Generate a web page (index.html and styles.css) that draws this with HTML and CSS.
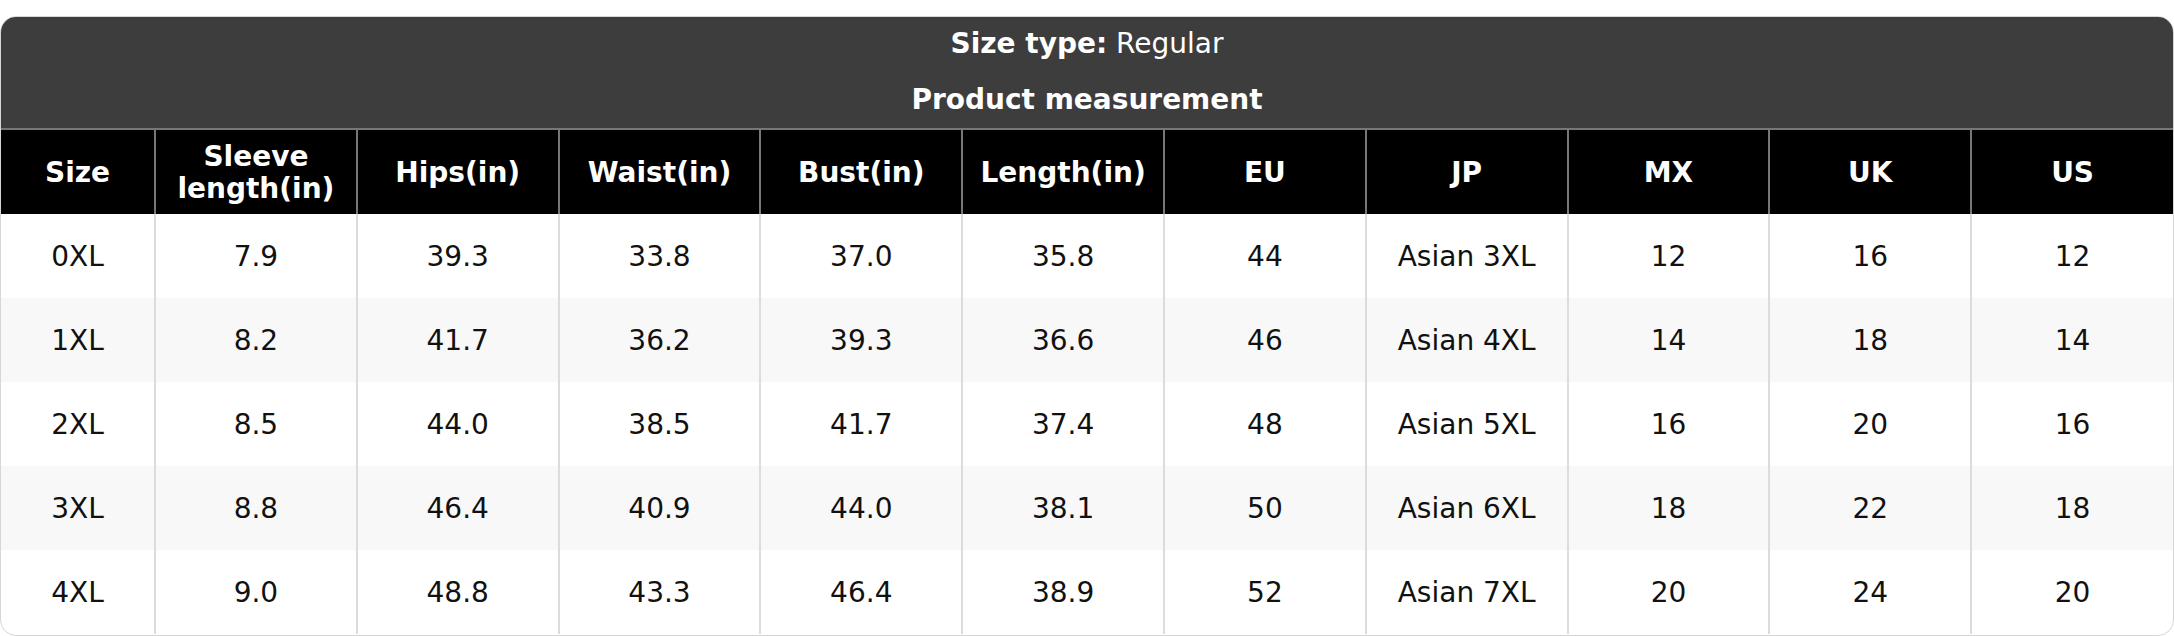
FILE: index.html
```html
<!DOCTYPE html>
<html>
<head>
<meta charset="utf-8">
<link rel="stylesheet" href="styles.css">
</head>
<body>
<div class="card">
  <div class="band">
    <div class="line"><b>Size type:</b> Regular</div>
    <div class="line"><b>Product measurement</b></div>
  </div>
  <table class="sizes">
    <colgroup>
      <col class="c-size">
      <col span="10">
    </colgroup>
    <thead>
      <tr>
        <th>Size</th><th>Sleeve<br>length(in)</th><th>Hips(in)</th><th>Waist(in)</th><th>Bust(in)</th><th>Length(in)</th><th>EU</th><th>JP</th><th>MX</th><th>UK</th><th>US</th>
      </tr>
    </thead>
    <tbody>
      <tr><td>0XL</td><td>7.9</td><td>39.3</td><td>33.8</td><td>37.0</td><td>35.8</td><td>44</td><td>Asian 3XL</td><td>12</td><td>16</td><td>12</td></tr>
      <tr><td>1XL</td><td>8.2</td><td>41.7</td><td>36.2</td><td>39.3</td><td>36.6</td><td>46</td><td>Asian 4XL</td><td>14</td><td>18</td><td>14</td></tr>
      <tr><td>2XL</td><td>8.5</td><td>44.0</td><td>38.5</td><td>41.7</td><td>37.4</td><td>48</td><td>Asian 5XL</td><td>16</td><td>20</td><td>16</td></tr>
      <tr><td>3XL</td><td>8.8</td><td>46.4</td><td>40.9</td><td>44.0</td><td>38.1</td><td>50</td><td>Asian 6XL</td><td>18</td><td>22</td><td>18</td></tr>
      <tr><td>4XL</td><td>9.0</td><td>48.8</td><td>43.3</td><td>46.4</td><td>38.9</td><td>52</td><td>Asian 7XL</td><td>20</td><td>24</td><td>20</td></tr>
    </tbody>
  </table>
</div>
</body>
</html>
```
FILE: styles.css
```css
html, body {
  margin: 0;
  padding: 0;
  background: #fff;
}
body {
  font-family: "DejaVu Sans", Verdana, sans-serif;
  color: #111;
  padding-top: 16px;
}
.card {
  border: 1px solid #d6d6d6;
  border-radius: 16px;
  overflow: hidden;
  box-sizing: border-box;
  height: 620px;
}
.band {
  background: #3d3d3d;
  color: #fff;
  height: 113px;
  box-sizing: border-box;
  padding-top: 7px;
  display: flex;
  flex-direction: column;
  align-items: center;
  gap: 16px;
  border-bottom: 2px solid #777;
}
.line {
  font-size: 28px;
  line-height: 40px;
}
.sizes {
  width: 100%;
  border-collapse: collapse;
  table-layout: fixed;
}
.c-size {
  width: 154px;
}
.sizes th {
  background: #000;
  color: #fff;
  font-size: 28px;
  font-weight: bold;
  line-height: 32px;
  height: 84px;
  padding: 2px 4px 0;
  border-left: 2px solid #777;
  box-sizing: border-box;
}
.sizes td {
  font-size: 28px;
  height: 84px;
  text-align: center;
  padding: 0;
  border-left: 2px solid #dcdcdc;
  box-sizing: border-box;
}
.sizes th:first-child,
.sizes td:first-child {
  border-left: none;
}
.sizes tbody tr:nth-child(even) td {
  background: #f8f8f8;
}
```
